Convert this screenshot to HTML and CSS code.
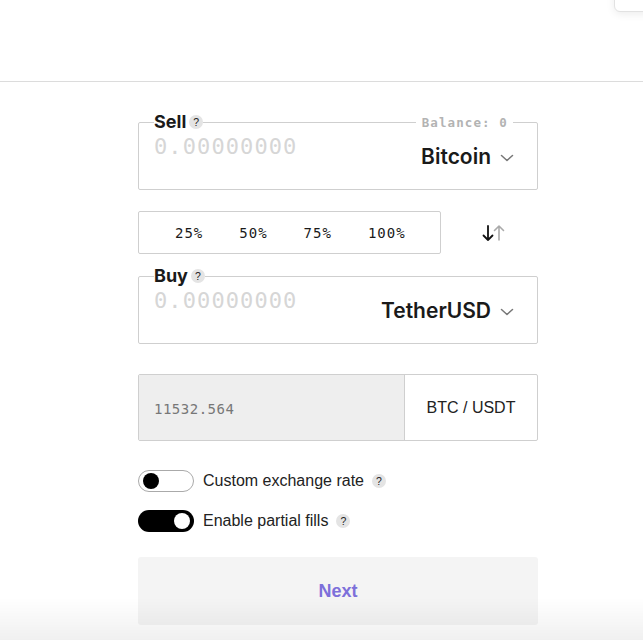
FILE: index.html
```html
<!DOCTYPE html>
<html>
<head>
<meta charset="utf-8">
<link rel="stylesheet" href="styles.css">
</head>
<body>
<header class="topbar">
  <div class="corner-box"></div>
</header>
<main class="form">
  <fieldset class="amount-box">
    <legend class="amount-legend">Sell <span class="help">?</span></legend>
    <span class="balance">Balance: 0</span>
    <div class="amount-row">
      <span class="amount-input">0.00000000</span>
      <span class="currency">Bitcoin <svg class="chev" width="14" height="8" viewBox="0 0 14 8"><path d="M1.5 1.5 L7 6.5 L12.5 1.5" fill="none" stroke="#777" stroke-width="1.5" stroke-linecap="round" stroke-linejoin="round"/></svg></span>
    </div>
  </fieldset>

  <div class="pct-row">
    <div class="pct-box">
      <button class="pct">25%</button>
      <button class="pct">50%</button>
      <button class="pct">75%</button>
      <button class="pct">100%</button>
    </div>
    <div class="swap">
      <svg width="24" height="18" viewBox="0 0 24 18">
        <path d="M6 2 V16 M1.5 11.5 L6 16 L10.5 11.5" fill="none" stroke="#111" stroke-width="1.8" stroke-linecap="round" stroke-linejoin="round"/>
        <path d="M17 16 V2 M12.5 6.5 L17 2 L21.5 6.5" fill="none" stroke="#aaa" stroke-width="1.6" stroke-linecap="round" stroke-linejoin="round"/>
      </svg>
    </div>
  </div>

  <fieldset class="amount-box buy">
    <legend class="amount-legend">Buy <span class="help">?</span></legend>
    <div class="amount-row">
      <span class="amount-input">0.00000000</span>
      <span class="currency">TetherUSD <svg class="chev" width="14" height="8" viewBox="0 0 14 8"><path d="M1.5 1.5 L7 6.5 L12.5 1.5" fill="none" stroke="#777" stroke-width="1.5" stroke-linecap="round" stroke-linejoin="round"/></svg></span>
    </div>
  </fieldset>

  <div class="rate-box">
    <div class="rate-value">11532.564</div>
    <div class="rate-pair">BTC / USDT</div>
  </div>

  <div class="toggle-row first">
    <span class="toggle off"><span class="knob"></span></span>
    <span class="toggle-label">Custom exchange rate</span>
    <span class="help small">?</span>
  </div>
  <div class="toggle-row">
    <span class="toggle on"><span class="knob"></span></span>
    <span class="toggle-label">Enable partial fills</span>
    <span class="help small">?</span>
  </div>

  <button class="next">Next</button>
</main>
<div class="bottom-fade"></div>
</body>
</html>
```
FILE: styles.css
```css
* { box-sizing: border-box; }
html, body { margin: 0; padding: 0; background: #fff; }
body { font-family: "Liberation Sans", Arial, sans-serif; color: #222; overflow: hidden; height: 640px; }

.topbar {
  position: relative;
  height: 82px;
  border-bottom: 1px solid #dcdcdc;
}
.corner-box {
  position: absolute;
  top: -12px;
  right: -12px;
  width: 41px;
  height: 24px;
  border: 1px solid #e2e2e2;
  border-radius: 6px;
  background: #fff;
  box-shadow: 0 2px 8px rgba(0,0,0,0.08);
}

.form {
  width: 400px;
  margin-left: 138px;
  padding-top: 30px;
  display: flex;
  flex-direction: column;
}

.amount-box {
  position: relative;
  margin: 0;
  padding: 0 15px;
  border: 1px solid #cfcfcf;
  border-radius: 2px;
  min-width: 0;
}
.amount-legend {
  padding: 0;
  font-family: Inter, "Noto Sans", sans-serif;
  font-weight: 700;
  font-size: 18px;
  line-height: 20px;
  color: #1a1a1a;
  display: flex;
  align-items: center;
  gap: 3px;
}
.help {
  display: inline-flex;
  align-items: center;
  justify-content: center;
  width: 14px;
  height: 14px;
  border-radius: 50%;
  background: #e4e4e4;
  color: #222;
  font-family: "Liberation Sans", Arial, sans-serif;
  font-weight: 400;
  font-size: 10.5px;
  line-height: 1;
}
.balance {
  position: absolute;
  top: -17px;
  right: 24px;
  padding: 0 5px 0 6px;
  background: #fff;
  font-family: "DejaVu Sans Mono", monospace;
  font-weight: 700;
  font-size: 12.5px;
  letter-spacing: 1.1px;
  line-height: 16px;
  color: #b3b3b3;
}
.amount-row {
  height: 57px;
  display: flex;
  justify-content: space-between;
  align-items: flex-start;
}
.amount-input {
  margin-top: 2px;
  font-family: "DejaVu Sans Mono", monospace;
  font-size: 22px;
  letter-spacing: 1.1px;
  line-height: 26px;
  color: #d6d6d6;
}
.currency {
  margin-top: 13px;
  display: flex;
  align-items: center;
  gap: 9px;
  font-family: Inter, "Noto Sans", sans-serif;
  font-weight: 600;
  font-size: 21px;
  line-height: 24px;
  color: #1a1a1a;
  margin-right: 8px;
}
.chev { display: block; margin-top: 1px; }

.pct-row {
  margin-top: 21px;
  display: flex;
  align-items: center;
}
.pct-box {
  width: 303px;
  height: 43px;
  border: 1px solid #cfcfcf;
  border-radius: 2px;
  display: flex;
  align-items: center;
  padding-left: 18px;
}
.pct {
  border: 0;
  background: none;
  padding: 0 18px;
  font-family: "DejaVu Sans Mono", monospace;
  font-size: 14px;
  letter-spacing: 1px;
  color: #1a1a1a;
  line-height: 20px;
}
.swap {
  flex: 1;
  display: flex;
  justify-content: center;
  padding-left: 9px;
}
.swap svg { display: block; }

.buy { margin-top: 12px; }

.rate-box {
  margin-top: 30px;
  height: 67px;
  border: 1px solid #cfcfcf;
  border-radius: 2px;
  display: flex;
  overflow: hidden;
}
.rate-value {
  width: 266px;
  background: #eeeeee;
  border-right: 1px solid #cfcfcf;
  display: flex;
  align-items: center;
  padding-left: 15px;
  padding-top: 2px;
  font-family: "DejaVu Sans Mono", monospace;
  font-size: 14px;
  letter-spacing: 0.5px;
  color: #777;
}
.rate-pair {
  flex: 1;
  display: flex;
  align-items: center;
  justify-content: center;
  font-size: 16px;
  color: #222;
}

.toggle-row {
  display: flex;
  align-items: center;
  height: 22px;
  margin-top: 18px;
}
.toggle-row.first { margin-top: 29px; }
.toggle {
  position: relative;
  width: 56px;
  height: 22px;
  border-radius: 11px;
  display: flex;
  align-items: center;
  padding: 0 4px;
}
.toggle.off { border: 1px solid #aaa; background: #fff; }
.toggle.on { background: #000; justify-content: flex-end; }
.knob { width: 16px; height: 16px; border-radius: 50%; }
.toggle.off .knob { background: #000; }
.toggle.on .knob { background: #fff; }
.toggle-label {
  margin-left: 9px;
  font-size: 16px;
  color: #222;
}
.help.small { margin-left: 8px; }

.next {
  margin-top: 25px;
  height: 68px;
  border: 0;
  border-radius: 3px;
  background: #f4f4f4;
  font-family: "Liberation Sans", Arial, sans-serif;
  font-weight: 700;
  font-size: 18px;
  color: #7d70da;
}

.bottom-fade {
  position: fixed;
  left: 0;
  right: 0;
  bottom: 0;
  height: 42px;
  background: linear-gradient(to bottom, rgba(0,0,0,0), rgba(0,0,0,0.06));
  pointer-events: none;
}
```
